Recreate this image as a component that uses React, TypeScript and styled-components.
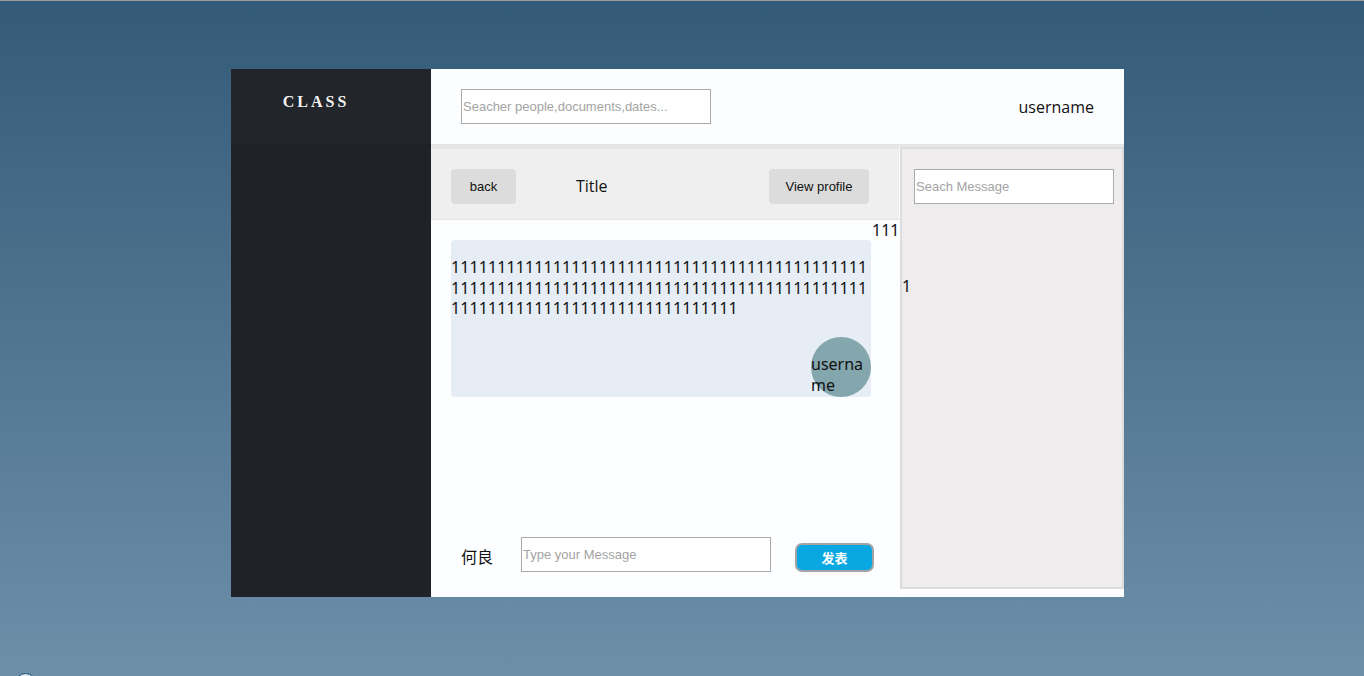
import React from "react";
import styled, { createGlobalStyle } from "styled-components";

const GlobalStyle = createGlobalStyle`
  html, body {
    margin: 0;
    padding: 0;
  }
  body {
    font-family: "Open Sans", "Noto Sans", sans-serif;
    background: linear-gradient(180deg, #335a78 0%, #6d90a9 100%);
    min-height: 676px;
  }
  * { box-sizing: border-box; }
  input::placeholder { color: #a3a3a3; }
`;

const Page = styled.div`
  min-height: 676px;
  border-top: 1px solid #9c9c9c;
  padding-top: 68px;
  padding-left: 231px;
  position: relative;
`;

const Shell = styled.div`
  width: 893px;
  height: 528px;
  display: flex;
`;

const Sidebar = styled.aside`
  width: 200px;
  background: #1f2228;
  display: flex;
  flex-direction: column;
`;

const Brand = styled.div`
  height: 76px;
  flex-shrink: 0;
  background: #22252a;
  border-bottom: 1px solid #1c1f24;
  display: flex;
  justify-content: center;
  padding-top: 24px;
  padding-right: 30px;
  font-family: "Liberation Serif", "DejaVu Serif", serif;
  font-weight: bold;
  font-size: 16px;
  letter-spacing: 3px;
  color: #f4f4f4;
`;

const Main = styled.main`
  flex: 1;
  display: flex;
  flex-direction: column;
  background: #fcfdff;
`;

const TopBar = styled.header`
  height: 75px;
  display: flex;
  align-items: center;
  justify-content: space-between;
  padding: 0 30px;
`;

const TextInput = styled.input<{ $w: number }>`
  width: ${(p) => p.$w}px;
  height: 35px;
  border: 1px solid #aaaaaa;
  background: #ffffff;
  padding: 0 1px;
  font-family: "Liberation Sans", Arial, sans-serif;
  font-size: 13px;
  outline: none;
`;

const UserName = styled.span`
  font-size: 16px;
  color: #111;
  margin-top: 1px;
`;

const Body = styled.div`
  flex: 1;
  display: flex;
  border-top: 3px solid #e4e5e7;
`;

const ChatColumn = styled.section`
  width: 468px;
  display: flex;
  flex-direction: column;
  border-top: 2px solid #e4e5e7;
  margin-right: 1px;
`;

const ChatHeader = styled.div`
  height: 71px;
  background: #efefef;
  border-bottom: 1px solid #e3e3e3;
  display: flex;
  align-items: center;
  padding: 4px 30px 0 20px;
`;

const GrayButton = styled.button<{ $w: number }>`
  width: ${(p) => p.$w}px;
  height: 35px;
  border: none;
  border-radius: 4px;
  background: #dcdcdc;
  font-family: "Liberation Sans", Arial, sans-serif;
  font-size: 13px;
  color: #111;
  padding: 0;
`;

const Title = styled.span`
  font-size: 16px;
  color: #111;
  margin-left: 60px;
  flex: 1;
`;

const Messages = styled.div`
  flex: 1;
  display: flex;
  flex-direction: column;
  padding: 20px 0 25px 20px;
  background: #fdfeff;
`;

const MessageRow = styled.div`
  position: relative;
  width: 420px;
`;

const Bubble = styled.div`
  height: 157px;
  background: #e6edf5;
  border-radius: 4px;
  padding-top: 17px;
  display: flex;
  flex-direction: column;
  font-family: "Noto Sans", "Open Sans", sans-serif;
  font-size: 16px;
  line-height: 20.5px;
  color: #111;
`;

const BubbleText = styled.div`
  word-break: break-all;
  width: 420px;
  letter-spacing: 0.1px;
`;

const Avatar = styled.div`
  margin-top: auto;
  align-self: flex-end;
  width: 60px;
  height: 60px;
  border-radius: 50%;
  background: #84a6ad;
  padding-top: 17px;
  font-size: 16px;
  line-height: 21px;
  word-break: break-all;
`;

const Stamp = styled.span<{ $top: number; $left: number }>`
  position: absolute;
  top: ${(p) => p.$top}px;
  left: ${(p) => p.$left}px;
  font-family: "Noto Sans", "Open Sans", sans-serif;
  font-size: 16px;
  line-height: 20px;
  color: #111;
`;

const Composer = styled.div`
  margin-top: auto;
  display: flex;
  align-items: center;
  padding-left: 10px;
`;

const Author = styled.span`
  font-family: "Noto Sans CJK SC", sans-serif;
  font-size: 16px;
  color: #111;
  width: 60px;
  margin-top: 2px;
`;

const SendButton = styled.button`
  margin-left: 24px;
  margin-top: 6px;
  width: 79px;
  height: 29px;
  border: 2px solid #a4a4a4;
  border-radius: 7px;
  background: #0aa8e2;
  color: #fff;
  font-family: "Noto Sans CJK SC", sans-serif;
  font-weight: bold;
  font-size: 13px;
  padding: 0;
`;

const SidePanel = styled.aside`
  width: 224px;
  height: 442px;
  background: #eeeced;
  border: 2px solid #dcdcdc;
  padding: 20px 0 0 12px;
`;

const Floater = styled.div`
  position: absolute;
  left: 15px;
  top: 672px;
  width: 21px;
  height: 21px;
  border-radius: 50%;
  background: #dfe8ef;
  border: 1px solid #1d4a70;
`;

export default function App() {
  return (
    <>
      <GlobalStyle />
      <Page>
        <Shell>
          <Sidebar>
            <Brand>CLASS</Brand>
          </Sidebar>
          <Main>
            <TopBar>
              <TextInput $w={250} placeholder="Seacher people,documents,dates..." />
              <UserName>username</UserName>
            </TopBar>
            <Body>
              <ChatColumn>
                <ChatHeader>
                  <GrayButton $w={65}>back</GrayButton>
                  <Title>Title</Title>
                  <GrayButton $w={100}>View profile</GrayButton>
                </ChatHeader>
                <Messages>
                  <MessageRow>
                    <Stamp $top={-20} $left={421}>111</Stamp>
                    <Stamp $top={36} $left={451}>1</Stamp>
                    <Bubble>
                      <BubbleText>
                        {"1".repeat(121)}
                      </BubbleText>
                      <Avatar>username</Avatar>
                    </Bubble>
                  </MessageRow>
                  <Composer>
                    <Author>何良</Author>
                    <TextInput $w={250} placeholder="Type your Message" />
                    <SendButton>发表</SendButton>
                  </Composer>
                </Messages>
              </ChatColumn>
              <SidePanel>
                <TextInput $w={200} placeholder="Seach Message" />
              </SidePanel>
            </Body>
          </Main>
        </Shell>
        <Floater />
      </Page>
    </>
  );
}
